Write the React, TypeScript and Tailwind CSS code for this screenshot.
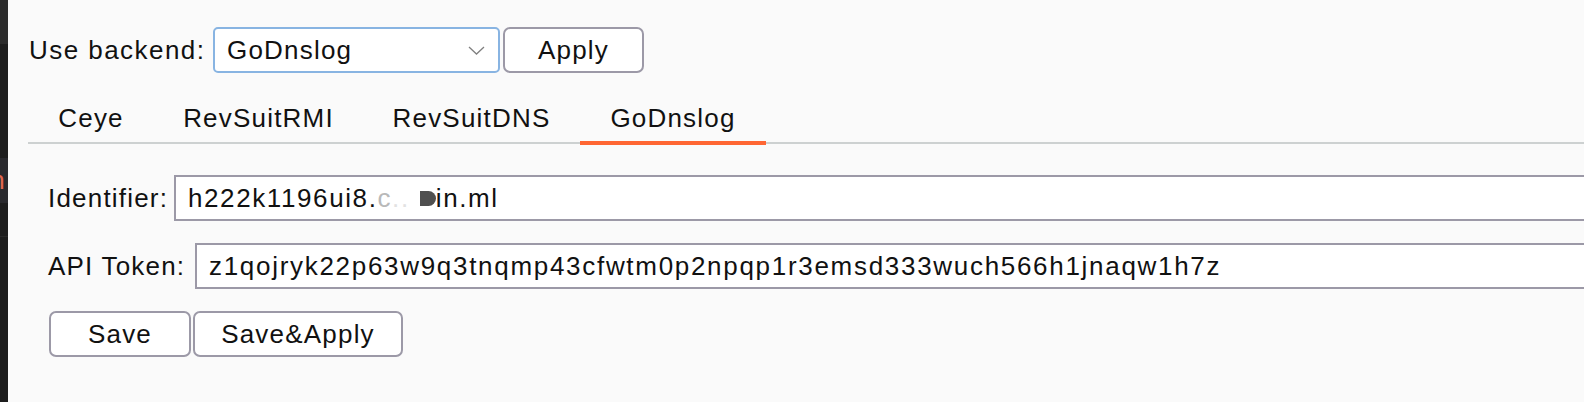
function Chevron() {
  return (
    <svg width="17" height="9" viewBox="0 0 17 9" className="shrink-0">
      <polyline points="1,1 8.5,8 16,1" fill="none" stroke="#808080" strokeWidth="1.3" />
    </svg>
  );
}

function LeftEdge() {
  return (
    <div className="flex w-[8px] shrink-0 flex-col">
      <div className="h-[44px] bg-[#2c2c2c]" />
      <div className="h-[114px] bg-[#1e1e1e]" />
      <div className="flex h-[45px] items-center justify-end overflow-hidden bg-[#2a2a2e]">
        <span className="mr-[2px] whitespace-nowrap text-[26px] text-[#e0674f]">n</span>
      </div>
      <div className="h-[33px] bg-[#1e1e1e]" />
      <div className="flex-1 border-t border-[#2a2a2a] bg-[#1d1d1d]" />
    </div>
  );
}

const tabs = [
  { name: "Ceye", w: "w-[126px]" },
  { name: "RevSuitRMI", w: "w-[209px]" },
  { name: "RevSuitDNS", w: "w-[217px]" },
  { name: "GoDnslog", w: "w-[186px]" },
];

export default function App() {
  const active = "GoDnslog";

  return (
    <div className="flex h-[402px] w-[1584px] overflow-hidden font-['Liberation_Sans',Arial,sans-serif] text-[26px] tracking-[1.2px] text-[#111]">
      <LeftEdge />
      <main className="flex flex-1 flex-col bg-[#fafafa]">
        {/* backend selector */}
        <div className="flex items-center pl-[21px] pt-[27px]">
          <span className="w-[184px] tracking-[1.45px]">Use backend:</span>
          <div className="flex h-[46px] w-[287px] items-center justify-between rounded-[5px] border-2 border-[#88b4e2] bg-white pl-[12px] pr-[13px]">
            <span>GoDnslog</span>
            <Chevron />
          </div>
          <button className="ml-[3px] flex h-[46px] w-[141px] items-center justify-center rounded-[7px] border-2 border-[#9c99a7] bg-white">
            Apply
          </button>
        </div>

        {/* tabs */}
        <div className="ml-[20px] mt-[28px] flex border-b-2 border-[#cdd1d1]">
          {tabs.map((t) => (
            <div
              key={t.name}
              className={`${t.w} mb-[-3px] flex h-[44px] items-start justify-center border-b-4 pt-[2px] ${
                t.name === active ? "border-[#ff6633]" : "border-transparent"
              }`}
            >
              <span className="leading-[30px]">{t.name}</span>
            </div>
          ))}
        </div>

        {/* settings form */}
        <div className="mt-[31px] flex flex-col gap-[22px] pl-[40px]">
          <div className="flex items-center">
            <span className="w-[126px]">Identifier:</span>
            <div className="flex h-[46px] flex-1 items-center border-2 border-r-0 border-[#9c99a7] bg-white pl-[12px] tracking-[1.6px]">
              <span>h222k1196ui8.</span>
              <span className="text-[#b9b9b9]">c</span>
              <span className="text-[#e2e2e2]">..</span>
              <svg width="16" height="15" viewBox="0 0 16 15" className="ml-[10px] mt-[1px] shrink-0">
                <path d="M0 0 H8.5 A7.5 7.5 0 0 1 8.5 15 H0 Z" fill="#4f4f4f" />
              </svg>
              <span>in.ml</span>
            </div>
          </div>
          <div className="flex items-center">
            <span className="w-[147px]">API Token:</span>
            <div className="flex h-[46px] flex-1 items-center border-2 border-r-0 border-[#9c99a7] bg-white pl-[12px]">
              <span className="whitespace-nowrap tracking-[1.7px]">
                z1qojryk22p63w9q3tnqmp43cfwtm0p2npqp1r3emsd333wuch566h1jnaqw1h7z
              </span>
            </div>
          </div>
          <div className="ml-[1px] flex">
            <button className="flex h-[46px] w-[142px] items-center justify-center rounded-[7px] border-2 border-[#9c99a7] bg-white">
              Save
            </button>
            <button className="ml-[2px] flex h-[46px] w-[210px] items-center justify-center rounded-[7px] border-2 border-[#9c99a7] bg-white">
              Save&amp;Apply
            </button>
          </div>
        </div>
      </main>
    </div>
  );
}
